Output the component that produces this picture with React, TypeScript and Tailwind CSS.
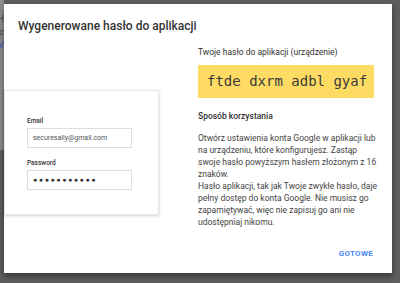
import React from 'react';

const LoginCard: React.FC = () => {
	return (
		<div className="mt-[56px] w-[155px] h-[125px] bg-white border border-[#e6e6e6] shadow-[0_1px_3px_rgba(0,0,0,0.18)] pl-[22px] pt-[26px]">
			<div className="text-[6.5px] leading-[8px] font-medium text-[#333]">Email</div>
			<div className="mt-[3px] w-[105px] h-[20px] border border-[#dedede] flex items-center pl-[5px] text-[7px] text-[#555]">
				securesally@gmail.com
			</div>
			<div className="mt-[11px] text-[6.5px] leading-[8px] font-medium text-[#333]">Password</div>
			<div className="mt-[3px] w-[105px] h-[20px] border border-[#dedede] flex items-center pl-[5px] text-[7px] tracking-[1.6px] text-[#333]">
				●●●●●●●●●●●
			</div>
		</div>
	);
};

const lines = [
	'Otwórz ustawienia konta Google w aplikacji lub',
	'na urządzeniu, które konfigurujesz. Zastąp',
	'swoje hasło powyższym hasłem złożonym z 16',
	'znaków.',
	'Hasło aplikacji, tak jak Twoje zwykłe hasło, daje',
	'pełny dostęp do konta Google. Nie musisz go',
	'zapamiętywać, więc nie zapisuj go ani nie',
	'udostępniaj nikomu.',
];

export default function App() {
	return (
		<div
			className="w-[400px] h-[283px] bg-[#5e5e5e] flex overflow-hidden"
			style={{ fontFamily: 'Roboto, "Noto Sans", sans-serif' }}
		>
			<div className="w-[4px] h-[150px] bg-[#8d8d8d] overflow-hidden flex flex-col items-end pt-[13px] text-[9px] leading-[13px] text-[#444]">
				<span>H</span>
				<span>c</span>
				<span className="text-[#3558c0]">V</span>
			</div>
			<div className="mt-[4px] w-[388px] h-[269px] bg-white shadow-[0_3px_6px_rgba(0,0,0,0.45)] flex flex-col">
				<h1 className="pl-[14px] pt-[14px] text-[12px] leading-[16px] font-medium text-[#333]">
					Wygenerowane hasło do aplikacji
				</h1>
				<div className="flex">
					<div className="w-[194px]">
						<LoginCard />
					</div>
					<div className="w-[182px] flex flex-col">
						<div className="mt-[12px] text-[8.5px] leading-[12px] text-[#333]">
							Twoje hasło do aplikacji (urządzenie)
						</div>
						<div
							className="mt-[7px] h-[33px] w-[176px] bg-[#fedb63] flex items-center pl-[9px] text-[14px] text-[#3a3a3a]"
							style={{ fontFamily: '"DejaVu Sans Mono", monospace' }}
						>
							ftde dxrm adbl gyaf
						</div>
						<div className="mt-[12px] text-[8.5px] leading-[12px] font-medium text-[#333]">
							Sposób korzystania
						</div>
						<p className="mt-[10px] text-[8.5px] leading-[12px] text-[#444]">
							{lines.map((l) => (
								<span key={l} className="block whitespace-nowrap">
									{l}
								</span>
							))}
						</p>
						<div className="mt-[21px] flex justify-end pr-[7px]">
							<button className="text-[8px] leading-[10px] font-bold tracking-[0.3px] text-[#4a8af4]">GOTOWE</button>
						</div>
					</div>
				</div>
			</div>
		</div>
	);
}
